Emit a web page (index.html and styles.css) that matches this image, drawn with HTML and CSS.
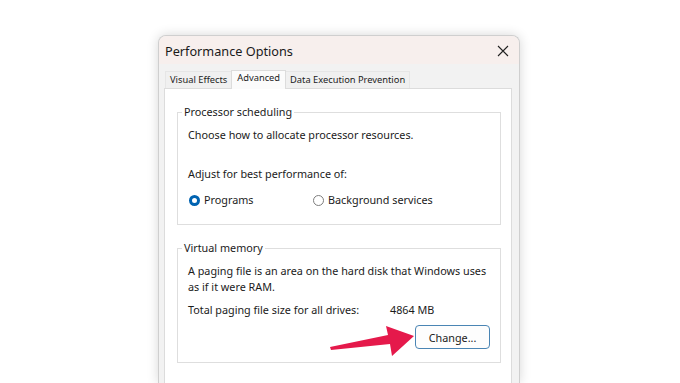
FILE: index.html
```html
<!DOCTYPE html>
<html>
<head>
<meta charset="utf-8">
<link rel="stylesheet" href="styles.css">
</head>
<body>
<div class="window">
  <div class="titlebar">
    <span class="title">Performance Options</span>
    <svg class="close" width="12" height="12" viewBox="0 0 12 12"><path d="M1 1L11 11M11 1L1 11" stroke="#222" stroke-width="1.1" fill="none"/></svg>
  </div>
  <div class="tabs">
    <div class="tab">Visual Effects</div>
    <div class="tab active">Advanced</div>
    <div class="tab">Data Execution Prevention</div>
  </div>
  <div class="panel">
    <fieldset class="group g1">
      <legend>Processor scheduling</legend>
      <p class="line l-choose">Choose how to allocate processor resources.</p>
      <p class="line l-adjust">Adjust for best performance of:</p>
      <div class="radios">
        <label class="radio r1"><span class="dot on"></span>Programs</label>
        <label class="radio"><span class="dot"></span>Background services</label>
      </div>
    </fieldset>
    <fieldset class="group g2">
      <legend>Virtual memory</legend>
      <p class="line l-paging">A paging file is an area on the hard disk that Windows uses<br>as if it were RAM.</p>
      <div class="line total"><span class="tlabel">Total paging file size for all drives:</span><span>4864 MB</span></div>
      <div class="btnrow"><button class="btn">Change...</button></div>
    </fieldset>
    <svg class="arrow" width="100" height="50" viewBox="0 0 100 50"><path d="M0 32 L58 20 L56 11 L84 21 L62 41 L60 29 L1 35 Z" fill="#e5194b"/></svg>
  </div>
</div>
</body>
</html>
```
FILE: styles.css
```css
html, body {
  margin: 0;
  padding: 0;
  background: #ffffff;
  font-family: "Noto Sans", "Open Sans", sans-serif;
  color: #1b1b1b;
  overflow: hidden;
}
body {
  padding: 35px 0 0 158px;
  height: 383px;
  box-sizing: border-box;
}
.window {
  width: 362px;
  height: 348px;
  box-sizing: border-box;
  border: 1px solid #cfcfcf;
  border-bottom: none;
  border-radius: 8px 8px 0 0;
  background: #f2f2f2;
  box-shadow: 0 0 12px rgba(0,0,0,0.16);
  overflow: hidden;
}
.titlebar {
  height: 28px;
  background: #f7efed;
  display: flex;
  align-items: center;
  justify-content: space-between;
  padding: 0 10px 0 6px;
}
.title {
  font-size: 12.7px;
  color: #1a1a1a;
  margin-top: 1px;
}
.close { margin-top: 1px; }
.tabs {
  display: flex;
  align-items: flex-end;
  height: 24px;
  padding-left: 6px;
}
.tab {
  font-size: 9.3px;
  height: 16px;
  line-height: 15px;
  padding: 0 4px;
  border: 1px solid #e6e6e6;
  border-bottom: none;
  background: #f0f0f0;
}
.tab.active {
  height: 18px;
  background: #fbfbfb;
  border-color: #dcdcdc;
  position: relative;
  top: 1px;
  margin: 0 -1px;
  line-height: 14px;
  padding: 0 5px;
  z-index: 1;
}
.panel {
  position: relative;
  margin: 0 7px 0 5px;
  height: 320px;
  background: #ffffff;
  border: 1px solid #dcdcdc;
  padding: 15px 10px 0 12px;
}
.group {
  margin: 0;
  border: 1px solid #dedede;
  padding: 0 0 0 10px;
  min-width: 0;
  box-sizing: border-box;
}
.group legend {
  font-size: 10.8px;
  padding: 0 2px;
  margin-left: -6px;
  line-height: 16px;
}
.g1 { height: 121px; }
.g2 { margin-top: 15px; height: 123px; }
.line {
  margin: 0;
  font-size: 10.8px;
  line-height: 16px;
}
.l-choose { margin-top: 7px; }
.l-adjust { margin-top: 23px; }
.radios {
  display: flex;
  margin-top: 10px;
  font-size: 10.8px;
  line-height: 16px;
}
.radio { display: flex; align-items: center; }
.r1 { width: 124px; }
.dot {
  width: 9px;
  height: 9px;
  border: 1.2px solid #7d7d7d;
  border-radius: 50%;
  margin-right: 4px;
  margin-left: 1px;
  background: #fff;
}
.dot.on {
  width: 5px;
  height: 5px;
  border: 3.3px solid #0063b1;
}
.l-paging { margin-top: 7px; }
.total { margin-top: 7px; display: flex; }
.tlabel { width: 202px; }
.btnrow {
  display: flex;
  justify-content: flex-end;
  padding-right: 10px;
  margin-top: 7px;
}
.btn {
  width: 75px;
  height: 24px;
  font-family: inherit;
  font-size: 10.8px;
  color: #1b1b1b;
  background: #fdfdfd;
  border: 1px solid #4a85b4;
  border-radius: 4px;
  padding: 0;
}
.arrow {
  position: absolute;
  left: 165px;
  top: 226px;
}
```
